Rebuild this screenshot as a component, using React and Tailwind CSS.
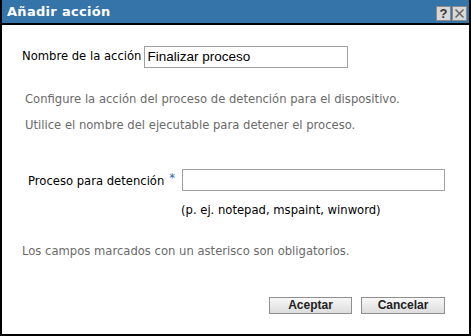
export default function App() {
  return (
    <div className="w-[471px] h-[336px] bg-white border-l-2 border-r-2 border-b-2 border-black flex flex-col font-['DejaVu_Sans',Verdana,sans-serif]">
      {/* Title bar */}
      <div className="h-[23px] bg-[#3574a9] border-b-2 border-black flex items-center justify-between pl-[5px] pr-[2px] box-content">
        <span className="text-white font-bold text-[13px] tracking-[0.3px]">Añadir acción</span>
        <div className="flex gap-[1px] mt-[4px]">
          <div className="w-[15px] h-[15px] bg-[#d8d8d8] border border-[#8a8a8a] flex items-center justify-center text-[#333] font-bold text-[13px] leading-none font-['Liberation_Sans',Arial,sans-serif]">
            ?
          </div>
          <div className="w-[15px] h-[15px] bg-[#d8d8d8] border border-[#8a8a8a] flex items-center justify-center">
            <svg width="11" height="11" viewBox="0 0 11 11" stroke="#666" strokeWidth="1.6">
              <line x1="1.5" y1="1.5" x2="9.5" y2="9.5" />
              <line x1="9.5" y1="1.5" x2="1.5" y2="9.5" />
            </svg>
          </div>
        </div>
      </div>

      {/* Body */}
      <div className="flex-1 flex flex-col pl-[20px] pr-[24px] text-[11.6px]">
        <div className="flex items-center mt-[21px]">
          <span className="text-black mr-[3px]">Nombre de la acción</span>
          <div className="w-[204px] h-[22px] border border-[#a0a0a0] flex items-center pl-[2px] text-[13.5px] text-black font-['Liberation_Sans',Arial,sans-serif]">
            Finalizar proceso
          </div>
        </div>

        <p className="mt-[23px] ml-[3px] text-[#6a6a6a]">
          Configure la acción del proceso de detención para el dispositivo.
        </p>
        <p className="mt-[9px] ml-[3px] text-[#6a6a6a]">
          Utilice el nombre del ejecutable para detener el proceso.
        </p>

        <div className="flex items-center mt-[34px] ml-[6px]">
          <span className="text-black mt-[3px]">Proceso para detención</span>
          <span className="text-[#2a66b8] ml-[5px] mr-[7px] -mt-[2px]">*</span>
          <div className="flex-1 h-[22px] border border-[#a0a0a0]" />
        </div>
        <p className="mt-[11px] ml-[159px] text-black">(p. ej. notepad, mspaint, winword)</p>

        <p className="mt-[24px] text-[#6a6a6a]">
          Los campos marcados con un asterisco son obligatorios.
        </p>

        <div className="flex justify-end gap-[9px] mt-[36px] font-['Liberation_Sans',Arial,sans-serif]">
          <button className="w-[83px] h-[17px] border border-[#8f8f8f] bg-gradient-to-b from-[#f8f8f8] to-[#dcdcdc] text-[12px] font-bold text-[#222] leading-none">
            Aceptar
          </button>
          <button className="w-[84px] h-[17px] border border-[#8f8f8f] bg-gradient-to-b from-[#f8f8f8] to-[#dcdcdc] text-[12px] font-bold text-[#222] leading-none">
            Cancelar
          </button>
        </div>
      </div>
    </div>
  );
}
